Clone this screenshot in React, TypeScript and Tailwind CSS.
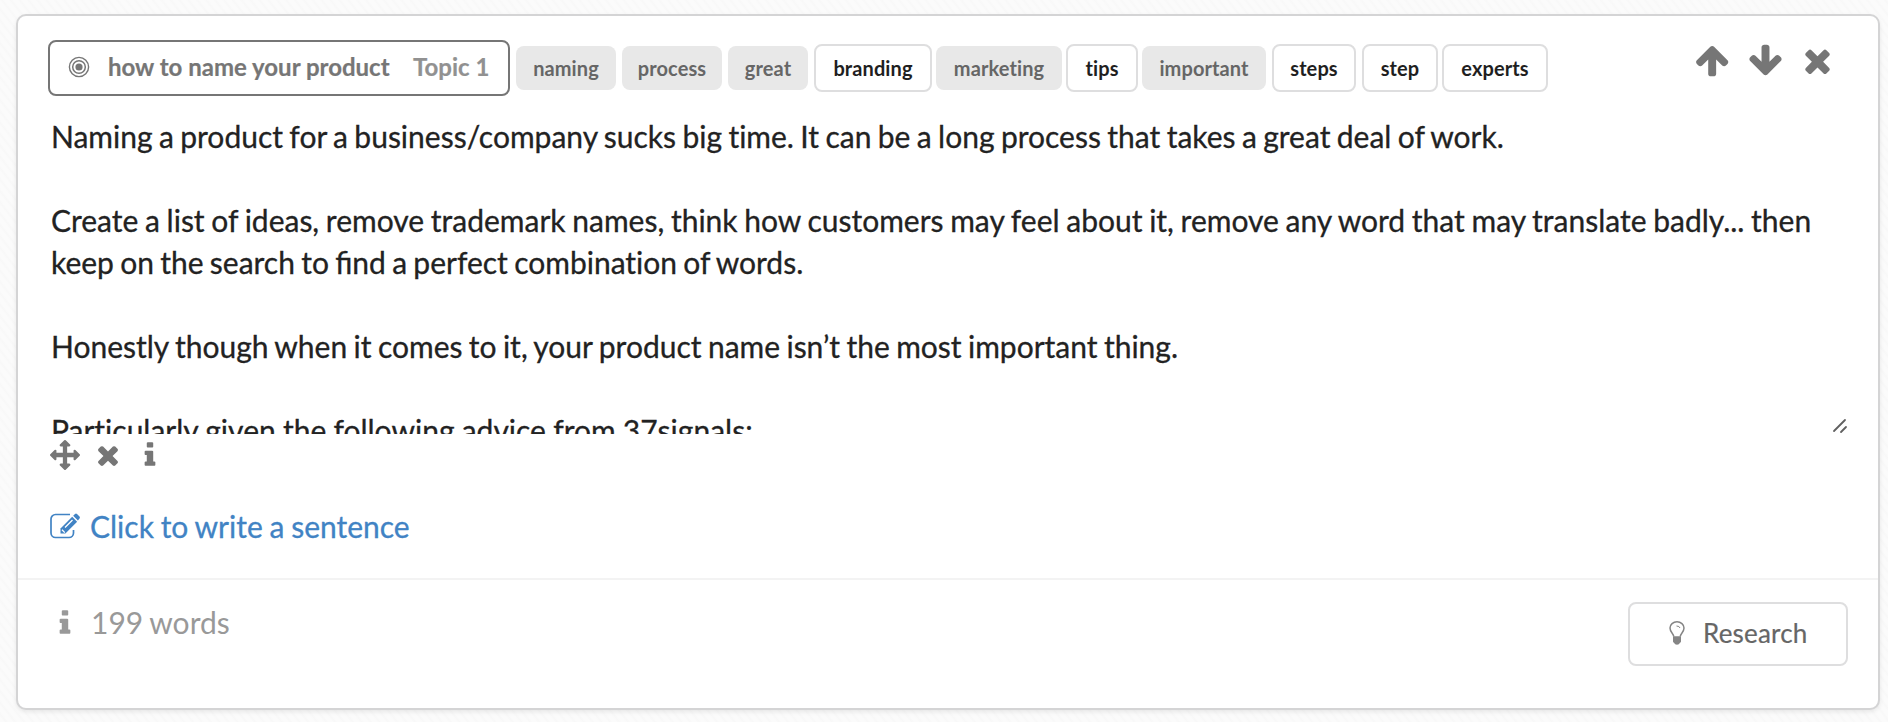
import React from "react";

const ICONS = {
  up: "M1611 971q0 51-37 90l-75 75q-38 38-91 38-54 0-90-38l-294-293v704q0 52-37.5 84.5t-90.5 32.5h-128q-53 0-90.5-32.5t-37.5-84.5v-704l-294 293q-36 38-90 38t-90-38l-75-75q-38-38-38-90 0-53 38-91l651-651q35-37 90-37 54 0 91 37l651 651q37 39 37 91z",
  down: "M1675 832q0 53-37 90l-651 652q-39 37-91 37-53 0-90-37l-651-652q-38-36-38-90 0-53 38-91l74-75q39-37 91-37 53 0 90 37l294 294v-704q0-52 38-90t90-38h128q52 0 90 38t38 90v704l294-294q37-37 90-37 52 0 91 37l75 75q37 39 37 91z",
  close:
    "M1490 1322q0 40-28 68l-136 136q-28 28-68 28t-68-28l-294-294-294 294q-28 28-68 28t-68-28l-136-136q-28-28-28-68t28-68l294-294-294-294q-28-28-28-68t28-68l136-136q28-28 68-28t68 28l294 294 294-294q28-28 68-28t68 28l136 136q28 28 28 68t-28 68l-294 294 294 294q28 28 28 68z",
  move: "M1792 896q0 26-19 45l-256 256q-19 19-45 19t-45-19-19-45v-128h-384v384h128q26 0 45 19t19 45-19 45l-256 256q-19 19-45 19t-45-19l-256-256q-19-19-19-45t19-45 45-19h128v-384h-384v128q0 26-19 45t-45 19-45-19l-256-256q-19-19-19-45t19-45l256-256q19-19 45-19t45 19 19 45v128h384v-384h-128q-26 0-45-19t-19-45 19-45l256-256q19-19 45-19t45 19l256 256q19 19 19 45t-19 45-45 19h-128v384h384v-128q0-26 19-45t45-19 45 19l256 256q19 19 19 45z",
  info: "M1216 1344v128q0 26-19 45t-45 19h-512q-26 0-45-19t-19-45v-128q0-26 19-45t45-19h64v-384h-64q-26 0-45-19t-19-45v-128q0-26 19-45t45-19h384q26 0 45 19t19 45v576h64q26 0 45 19t19 45zm-128-1152v192q0 26-19 45t-45 19h-256q-26 0-45-19t-19-45v-192q0-26 19-45t45-19h256q26 0 45 19t19 45z",
};

function Icon({ name, className }: { name: keyof typeof ICONS; className: string }) {
  return (
    <svg viewBox="0 0 1792 1792" fill="currentColor" className={`block shrink-0 ${className}`}>
      <path d={ICONS[name]} />
    </svg>
  );
}

const TAGS = [
  { label: "naming", active: false, box: "w-[100px] ml-[6px]" },
  { label: "process", active: false, box: "w-[100px] ml-[6px]" },
  { label: "great", active: false, box: "w-[80px] ml-[6px]" },
  { label: "branding", active: true, box: "w-[118px] ml-[6px]" },
  { label: "marketing", active: false, box: "w-[126px] ml-[4px]" },
  { label: "tips", active: true, box: "w-[72px] ml-[4px]" },
  { label: "important", active: false, box: "w-[124px] ml-[4px]" },
  { label: "steps", active: true, box: "w-[84px] ml-[6px]" },
  { label: "step", active: true, box: "w-[76px] ml-[6px]" },
  { label: "experts", active: true, box: "w-[106px] ml-[4px]" },
];

export default function App() {
  return (
    <div className="h-[722px] overflow-hidden bg-[#fafafa] bg-[repeating-linear-gradient(52deg,#fbfbfb_0px,#fbfbfb_3px,#f8f8f8_5px,#fbfbfb_7px)] pl-4 pt-3.5 font-[Lato,sans-serif] [font-variant-ligatures:none]">
      <main className="flex h-[696px] w-[1864px] flex-col rounded-[10px] border-2 border-[#d4d4d5] bg-white shadow-[0_2px_4px_rgba(0,0,0,0.08)]">
        <header className="flex h-[80px] shrink-0 items-start pl-[30px] pt-6">
          <div className="flex h-14 w-[462px] shrink-0 items-center rounded-lg border-2 border-[#767676] pl-[18px] text-[#767676]">
            <svg viewBox="0 0 22 22" className="mt-[-2px] size-[22px]" fill="none" stroke="currentColor">
              <circle cx="11" cy="11" r="9.6" strokeWidth="1.4" />
              <circle cx="11" cy="11" r="6.3" strokeWidth="1.5" />
              <circle cx="11" cy="11" r="3.6" fill="currentColor" stroke="none" />
            </svg>
            <span className="-mt-0.5 ml-[18px] w-[305px] whitespace-nowrap text-[24px] font-bold leading-[48px] [-webkit-text-stroke:0.2px]">how to name your product</span>
            <span className="-mt-0.5 whitespace-nowrap text-[24px] font-bold leading-[48px] text-[#919191] [-webkit-text-stroke:0.2px]">Topic 1</span>
          </div>
          {TAGS.map((t) => (
            <span
              key={t.label}
              className={`flex shrink-0 items-center justify-center whitespace-nowrap rounded-lg pb-px text-[20px] font-bold tracking-[0.1px] ${t.box} ${
                t.active
                  ? "mt-1 h-12 border-2 border-[#dededf] bg-white text-[#1f1f1f]"
                  : "mt-1.5 h-11 bg-[#e8e8e8] text-[#666666]"
              }`}
            >
              {t.label}
            </span>
          ))}
          <nav className="ml-auto mr-[42px] mt-0.5 flex items-start gap-[15px] text-[#767676]">
            <Icon name="up" className="size-[37px]" />
            <Icon name="down" className="size-[37px]" />
            <Icon name="close" className="size-[37px]" />
          </nav>
        </header>

        <section className="relative ml-[33px] h-[338px] w-[1797px] shrink-0 overflow-hidden pt-[19px] text-[30px] leading-[42px] text-[#222222] [-webkit-text-stroke:0.3px]">
          <p className="[word-spacing:-1.3px]">Naming a product for a business/company sucks big time. It can be a long process that takes a great deal of work.</p>
          <p className="mt-[42px] whitespace-nowrap [word-spacing:-1px]">
            Create a list of ideas, remove trademark names, think how customers may feel about it, remove any word that may translate badly... then
            <br />
            <span className="[word-spacing:-1.4px]">
              keep on the search to <span className="[font-variant-ligatures:normal]">find</span> a perfect combination of words.
            </span>
          </p>
          <p className="mt-[42px] [word-spacing:-1.3px]">Honestly though when it comes to it, your product name isn’t the most important thing.</p>
          <p className="mt-[42px] [word-spacing:-0.5px]">Particularly given the following advice from 37signals:</p>
          <svg viewBox="0 0 16 16" className="absolute bottom-0 right-0 size-4" stroke="#606060" strokeWidth="1.8" strokeLinecap="round">
            <path d="M2 13 13 2M9 14l5-5" />
          </svg>
        </section>

        <div className="flex h-[42px] shrink-0 items-center pl-8 text-[#767676]">
          <Icon name="move" className="size-[30px]" />
          <Icon name="close" className="ml-[13px] size-[30px]" />
          <Icon name="info" className="ml-3 size-[30px]" />
        </div>

        <button className="mt-[28px] flex h-[44px] w-fit shrink-0 items-center pl-8 text-[30px] leading-[42px] text-[#4183c4]">
          <svg viewBox="0 0 30 26" className="h-[26px] w-[30px]" fill="none" stroke="currentColor" strokeWidth="1.7">
            <path d="M20 1.5H5.500A4.500 4.500 0 0 0 1 6v14a4.500 4.500 0 0 0 4.500 4.500H19A4.500 4.500 0 0 0 23.500 20v-3" />
            <path d="M10.500 20.500v-5L22.200 3.800l4.900 4.900L15.400 20.500z" fill="currentColor" stroke="none" />
            <path d="M23.200 2.800 25 1q1-.8 2 0l2.500 2.600q.8 1 0 2L27.900 7.400z" fill="currentColor" stroke="none" />
            <path d="m15 14.500 7.500-7.500M12 16.800l2.800 2.800" stroke="white" strokeWidth="1.300" />
          </svg>
          <span className="ml-[10px] whitespace-nowrap [-webkit-text-stroke:0.3px] [word-spacing:-0.9px]">Click to write a sentence</span>
        </button>

        <footer className="mt-[30px] flex flex-1 items-start border-t-2 border-[#f3f3f3] pl-8 pr-[30px] text-[#999999]">
          <Icon name="info" className="mt-[28px] size-[30px]" />
          <span className="ml-[11px] mt-[21px] whitespace-nowrap text-[30px] leading-[42px] [word-spacing:-1px]">199 words</span>
          <button className="ml-auto mt-[22px] flex h-16 w-[220px] items-center rounded-lg border-2 border-[#dededf] pb-0.5 pl-[39px] text-[26px] text-[#666666]">
            <svg viewBox="0 0 16 24" className="h-6 w-4" fill="none" stroke="#858585">
              <path d="M4.700 15.500C4.500 12.500 1 11 1 7a7 6.200 0 0 1 14 0c0 4-3.500 5.500-3.700 8.500" strokeWidth="1.500" />
              <path d="M4 15.300h8v5.200q0 1-1 1.300-.8 1.900-3 1.900t-3-1.900q-1-.3-1-1.300z" fill="#858585" stroke="none" />
              <path d="M7.500 5q3 0 3.500 2" strokeWidth="1" />
            </svg>
            <span className="ml-[18px] tracking-[0.2px] [-webkit-text-stroke:0.2px]">Research</span>
          </button>
        </footer>
      </main>
    </div>
  );
}
